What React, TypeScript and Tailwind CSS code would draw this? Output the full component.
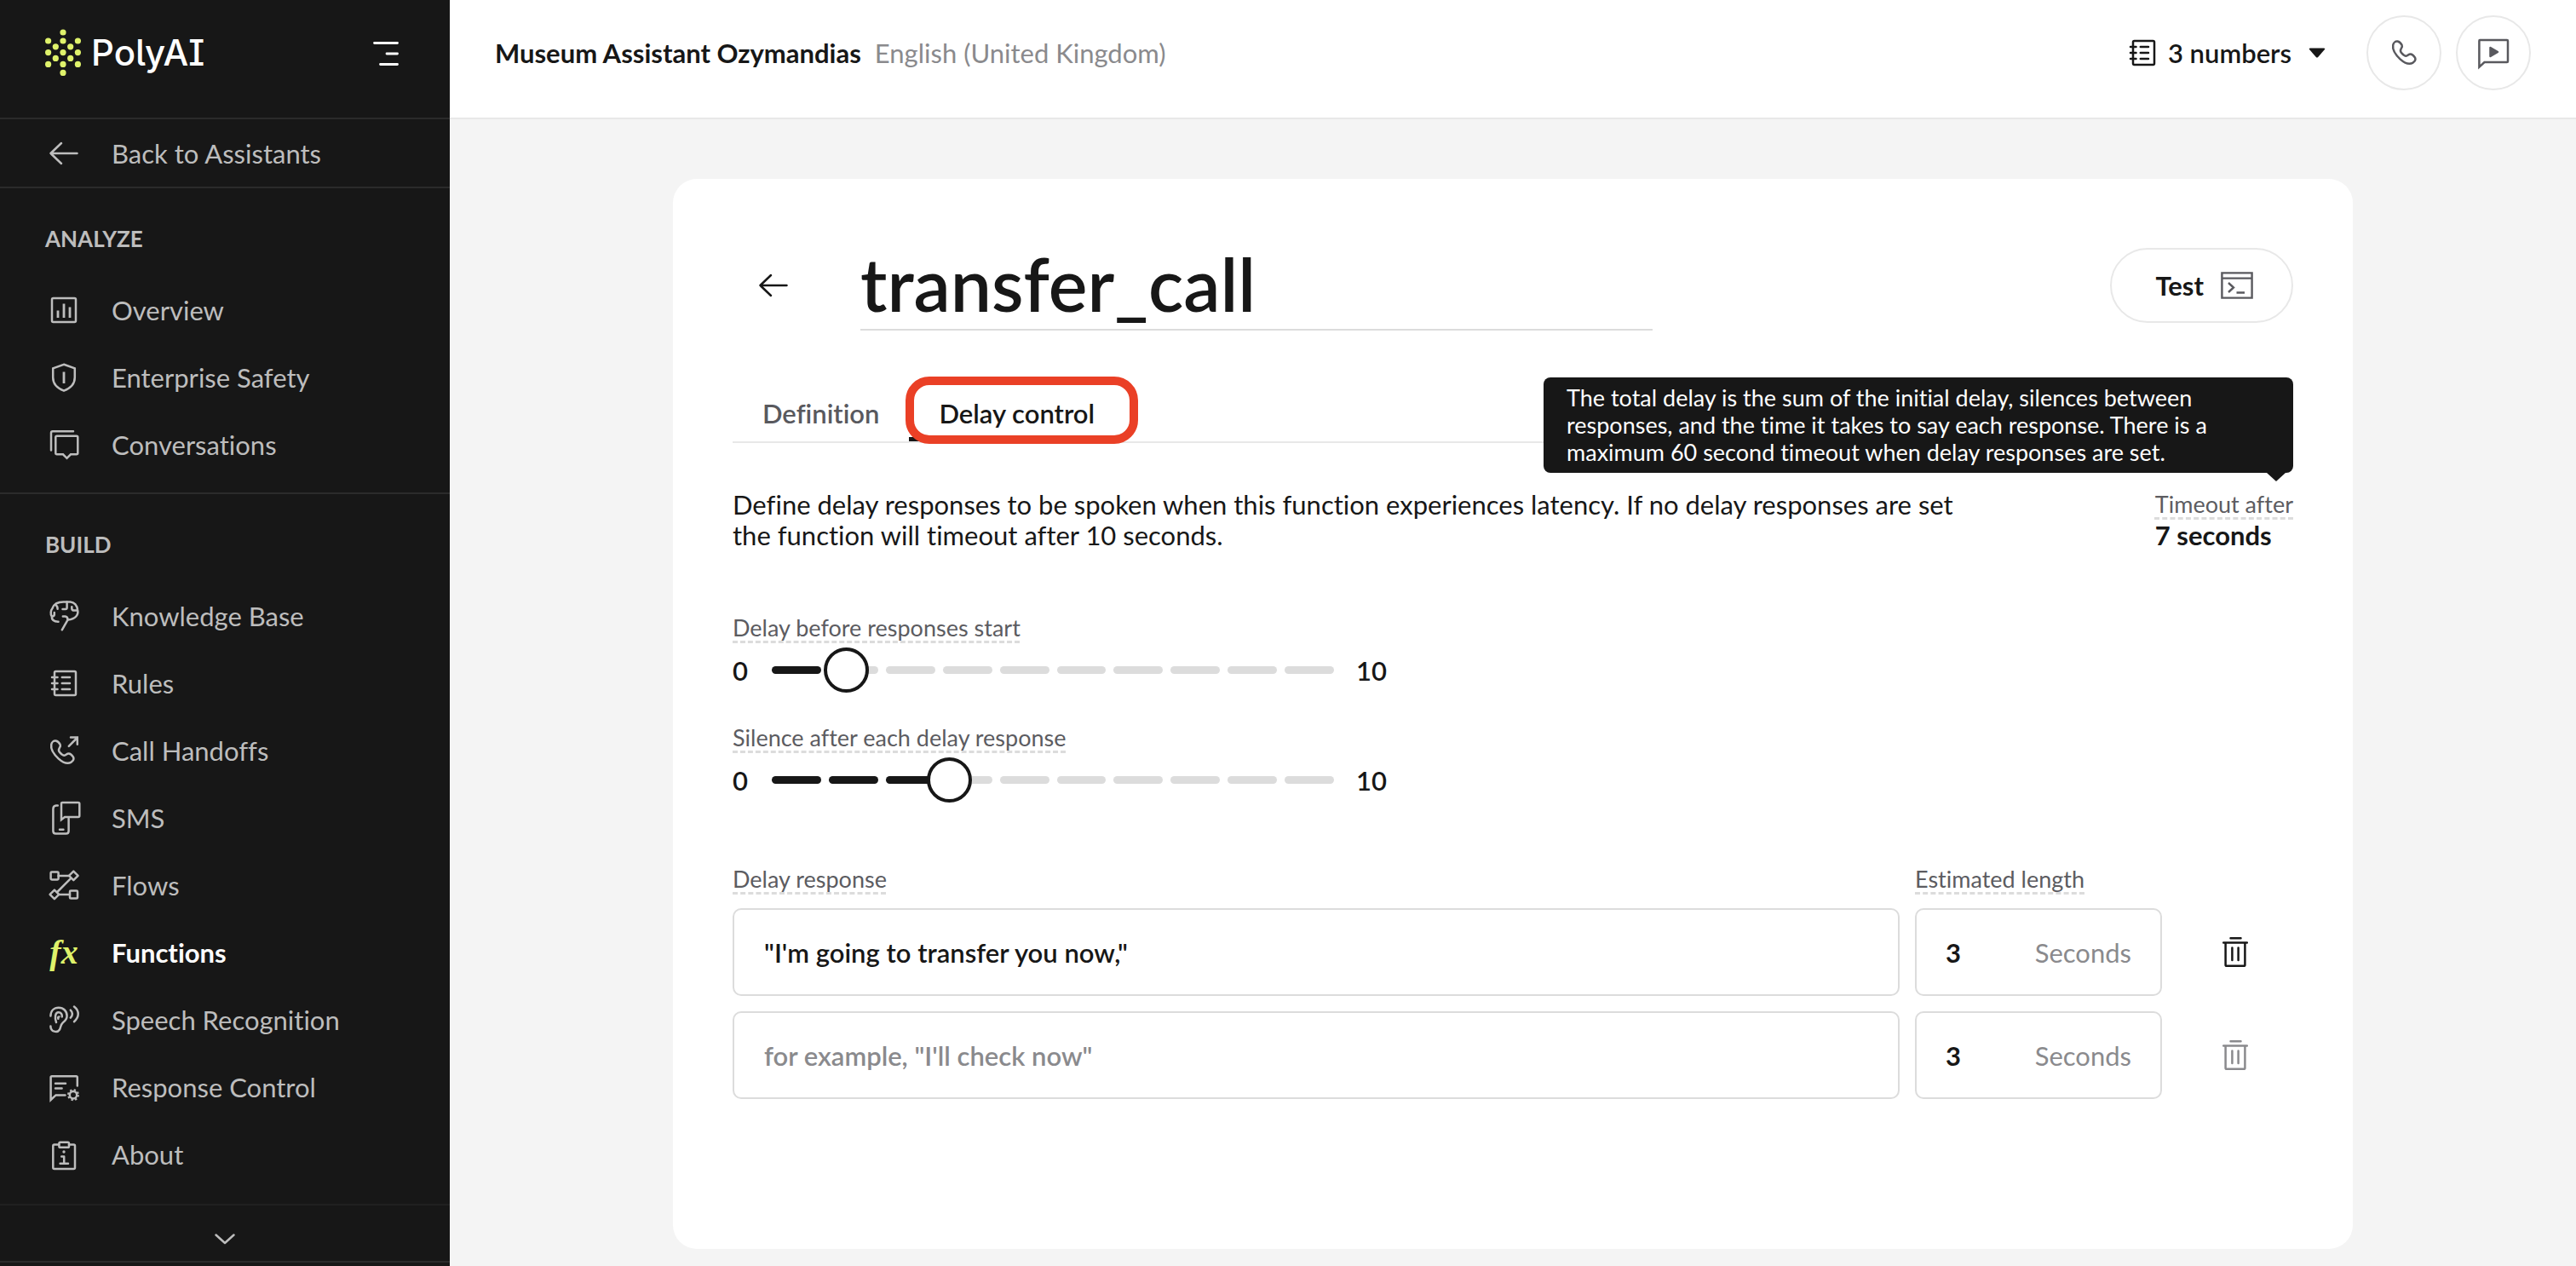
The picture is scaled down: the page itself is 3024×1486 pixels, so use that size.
import { useState } from "react";
import type { ReactNode } from "react";

function Icon({ children }: { children: ReactNode }) {
  return (
    <svg
      viewBox="0 0 40 40"
      className="size-10 shrink-0"
      fill="none"
      stroke="currentColor"
      strokeWidth="2.5"
      strokeLinecap="round"
      strokeLinejoin="round"
      aria-hidden="true"
    >
      {children}
    </svg>
  );
}

const ArrowLeft = () => (
  <Icon>
    <path d="M17 8 4.5 20 17 32M4.5 20H35.5" />
  </Icon>
);

const Overview = () => (
  <Icon>
    <rect x="6" y="6" width="28" height="28" rx="1.5" />
    <path d="M13 20.5V29M20 12.5V29M27 16.5V29" strokeWidth="2.8" strokeLinecap="butt" />
  </Icon>
);

const Shield = () => (
  <Icon>
    <path d="M20 4.8 32.8 9.3V20C32.8 27.5 27.5 32.8 20 35.6 12.5 32.8 7.2 27.5 7.2 20V9.3Z" strokeLinejoin="miter" />
    <path d="M20 13.5V27" strokeWidth="2.8" strokeLinecap="butt" />
  </Icon>
);

const Conversations = () => (
  <Icon>
    <path d="M5 26.5V6Q5 4.2 6.8 4.2H31" />
    <path d="M11.8 9.8H34.8Q36.3 9.8 36.3 11.3V29.8Q36.3 31.3 34.8 31.3H28L23.5 35.8 19 31.3H11.8Q10.3 31.3 10.3 29.8V11.3Q10.3 9.8 11.8 9.8Z" strokeLinejoin="miter" />
  </Icon>
);

const Brain = () => (
  <Icon>
    <path d="M13.5 26.8C8 27 5.5 24 5.8 20.5 4 18 4.5 13.5 6.5 11 8 6.5 12 3.4 19.5 3.4H27.5C32.5 3.6 35.5 8 36 12.5 37.5 18 34.5 23.5 24.5 24.6L17.8 36.3" />
    <path d="M18.8 20.6H21.5Q24.5 20.8 24.5 24.6M23.6 3.6V10.2Q23.6 12 21.8 12H18.5M11 7.5Q12.6 9 12.6 11.8M8.8 16V18.5Q8.6 20.2 6.5 20.4M29.3 9.3V11.3Q29.5 13.6 32 13.6H35.5" />
  </Icon>
);

const Notebook = () => (
  <Icon>
    <rect x="9" y="6" width="25" height="28" rx="1.5" />
    <path d="M6 13H12.5M6 20H12.5M6 27H12.5M17.8 13H27M17.8 20H27M17.8 27H27" />
  </Icon>
);

const handset =
  "M10.5 8.6C12.5 9 14.5 10.9 15.6 12.8 16.6 14.8 15.3 16.3 14.4 17.8 13.4 19.6 13.9 20.8 15.4 22.4 17.2 24.4 18.8 25.8 20.4 25.8 22.6 25.8 23.4 23.4 25.6 23.4 27.8 23.4 29.8 25.6 31 27.6 32.2 30 30.8 32 28.6 33.6 24.8 36 19.2 34.4 13.8 29.6 8 24.2 4.4 18 5.2 13 5.7 10.2 8 8.2 10.5 8.6Z";

const Handoff = () => (
  <Icon>
    <path d={handset} />
    <path d="M25.8 14.8 35.6 5M28 4.6H35.8V12.8" strokeLinejoin="miter" />
  </Icon>
);

const Sms = () => (
  <Icon>
    <path d="M12.8 5.4H11Q7.4 5.6 7.4 9.4V35.4Q7.4 38.4 10.4 38.4H22.6Q25.6 38.4 25.6 35.4V20.8M15 33.8H19.4" />
    <path d="M18.2 1.9H36.8Q38.3 1.9 38.3 3.4V17.6Q38.3 19.1 36.8 19.1H21L17 22.2V3.1Q17 1.9 18.2 1.9Z" strokeLinejoin="miter" />
  </Icon>
);

const Flows = () => (
  <Icon>
    <rect x="4.6" y="4.4" width="9" height="9" rx="1.2" />
    <rect x="27" y="26.6" width="9" height="9" rx="1.2" />
    <path d="M31.3 3.6 36.6 8.9 31.3 14.2 26 8.9ZM8.9 25.6 14.2 30.9 8.9 36.2 3.6 30.9Z" />
    <path d="M13.6 8.9H26M28 12.2 12.2 28M14.2 30.9H27" />
  </Icon>
);

const Ear = () => (
  <Icon>
    <path d="M4.4 15.5C4.6 9.5 8.4 5.8 13.8 5.8 19.6 5.8 23.6 9.8 23.6 15.4 23.6 19.4 21.2 21.4 18.8 23.4 15.8 26 16.8 28.4 14.8 31.8 12.6 35.2 4.4 34.8 4.4 27.4" />
    <path d="M11 23C9.2 18 9.4 11.2 13.8 11.2 16.6 11.2 18 13.6 17.8 16.4M13.4 18.8Q12.6 16.6 14.4 16.4" />
    <path d="M27.8 8.6Q32 13 27.8 17.6M32 4.6C38.4 9.6 38.2 17 32 22.2" />
  </Icon>
);

const ResponseControl = () => (
  <Icon>
    <path d="M35.8 18.6V8.6Q35.8 7.2 34.4 7.2H6Q4.6 7.2 4.6 8.6V35L10.6 29.4H21.5" strokeLinejoin="miter" />
    <path d="M10 15.7H22M10 21.6H17.6" />
    <circle cx="31" cy="29.2" r="4.2" />
    <circle cx="31" cy="29.2" r="6" strokeWidth="2" strokeDasharray="2.35 2.36" strokeLinecap="butt" />
  </Icon>
);

const About = () => (
  <Icon>
    <path d="M14.2 8.6H8.8Q7.3 8.6 7.3 10.1V35.4Q7.3 36.9 8.8 36.9H31.5Q33 36.9 33 35.4V10.1Q33 8.6 31.5 8.6H26" />
    <rect x="14.4" y="5.8" width="11.6" height="6" rx="1.4" />
    <path d="M17.2 22.6H20.2V30.6M15.6 30.8H25" />
    <circle cx="20" cy="17" r="1" fill="currentColor" strokeWidth="1.4" />
  </Icon>
);

const Trash = () => (
  <Icon>
    <path d="M14.5 3.2H26.5M6.2 8.4H33.8M8.6 8.4V34.4Q8.6 35.8 10 35.8H30Q31.4 35.8 31.4 34.4V8.4M16.4 14.4V29M23.6 14.4V29" />
  </Icon>
);

const FunctionGlyph = () => (
  <span aria-hidden="true" className="w-10 shrink-0 text-center font-['Liberation_Serif',serif] text-[40px] leading-10 font-bold text-[#dff26b] italic">
    fx
  </span>
);

const logoDots: [number, number][] = [
  [21, 4], [3.6, 14], [21, 14], [38.4, 14], [12.3, 20.8], [29.7, 20.8], [3.6, 27.6], [21, 27.6],
  [38.4, 27.6], [12.3, 34.4], [29.7, 34.4], [3.6, 41.4], [21, 41.4], [38.4, 41.4], [21, 51.4],
];

function NavItem({ icon, label, active }: { icon: ReactNode; label: string; active?: boolean }) {
  return (
    <li>
      <a
        href="#"
        aria-current={active ? "page" : undefined}
        className={`flex h-[79px] items-center gap-9 pl-[55px] ${active ? "font-bold text-white" : "text-[#bdbdbd]"}`}
      >
        {icon}
        {label}
      </a>
    </li>
  );
}

function NavSection({ title, children }: { title: string; children: ReactNode }) {
  return (
    <section>
      <h2 className="px-[53px] pt-[43px] pb-7 text-[26px] leading-8 font-bold">{title}</h2>
      <ul>{children}</ul>
    </section>
  );
}

function Sidebar() {
  return (
    <aside className="flex w-[528px] shrink-0 flex-col bg-[#171717] text-[#bdbdbd]">
      <div className="flex items-center justify-between border-b-2 border-[#2b2b2b] pt-[18px] pr-[60px] pb-8 pl-[53px]">
        <a href="#" className="flex h-[88px] items-center gap-3 text-white">
          <svg viewBox="0 0 42 56" className="h-14 w-[42px]" fill="#dff26b" aria-hidden="true">
            {logoDots.map(([x, y]) => (
              <circle key={`${x}-${y}`} cx={x} cy={y} r="3.6" />
            ))}
          </svg>
          <span className="font-[Inter,sans-serif] text-[42px] leading-none font-medium [font-feature-settings:'cv05','cv08']">PolyAI</span>
        </a>
        <button type="button" aria-label="Collapse menu" className="text-white">
          <svg viewBox="0 0 30 30" className="size-[30px]" stroke="currentColor" strokeWidth="2.8" strokeLinecap="round" aria-hidden="true">
            <path d="M1.5 3.5H28.5M16 16H28.5M8.5 28.5H28.5" />
          </svg>
        </button>
      </div>
      <a href="#" className="flex h-[81px] items-center gap-9 border-b-2 border-[#2b2b2b] pl-[55px]">
        <ArrowLeft />
        Back to Assistants
      </a>
      <nav className="grow">
        <div className="border-b-2 border-[#2b2b2b] pb-[17px]">
          <NavSection title="ANALYZE">
            <NavItem icon={<Overview />} label="Overview" />
            <NavItem icon={<Shield />} label="Enterprise Safety" />
            <NavItem icon={<Conversations />} label="Conversations" />
          </NavSection>
        </div>
        <NavSection title="BUILD">
          <NavItem icon={<Brain />} label="Knowledge Base" />
          <NavItem icon={<Notebook />} label="Rules" />
          <NavItem icon={<Handoff />} label="Call Handoffs" />
          <NavItem icon={<Sms />} label="SMS" />
          <NavItem icon={<Flows />} label="Flows" />
          <NavItem icon={<FunctionGlyph />} label="Functions" active />
          <NavItem icon={<Ear />} label="Speech Recognition" />
          <NavItem icon={<ResponseControl />} label="Response Control" />
          <NavItem icon={<About />} label="About" />
        </NavSection>
      </nav>
      <div className="border-t-2 border-[#202020] pb-1">
        <button type="button" aria-label="Show more" className="flex w-full items-center justify-center border-b-2 border-[#2b2b2b] pt-5 pb-[5px]">
          <Icon>
            <path d="M9.5 14.5 20 24 30.5 14.5" />
          </Icon>
        </button>
      </div>
    </aside>
  );
}

function TopBar() {
  return (
    <header className="flex items-center border-b-2 border-[#e8e8e8] bg-white pt-[18px] pr-[53px] pb-8 pl-[53px]">
      <h1 className="font-bold">Museum Assistant Ozymandias</h1>
      <p className="ml-4 text-[#8a8a8d]">English (United Kingdom)</p>
      <button type="button" className="mr-12 ml-auto flex items-center gap-[10px] font-semibold">
        <Notebook />
        3 numbers
        <svg viewBox="0 0 20 12" className="ml-[10px] h-3 w-5" fill="currentColor" aria-hidden="true">
          <path d="M2 .5H18Q20 .5 19 2L11.2 11Q10 12 8.8 11L1 2Q0 .5 2 .5Z" />
        </svg>
      </button>
      <div className="flex gap-[17px] text-[#59595e]">
        <button type="button" aria-label="Call" className="flex size-[88px] items-center justify-center rounded-full border-2 border-[#e8e8e8]">
          <Icon>
            <path d={handset} transform="translate(2 -2)" />
          </Icon>
        </button>
        <button type="button" aria-label="Chat" className="flex size-[88px] items-center justify-center rounded-full border-2 border-[#e8e8e8]">
          <Icon>
            <path d="M4 5H36Q37 5 37 6V30Q37 31 36 31H9.5L3.4 36.6V6Q3.4 5 4 5Z" strokeLinejoin="miter" />
            <path d="M16.5 14V24L25 19Z" fill="currentColor" />
          </Icon>
        </button>
      </div>
    </header>
  );
}

const hint = "text-[27px] text-[#5c5c61] underline decoration-[#dcdcdc] decoration-dashed decoration-[3px] underline-offset-[5px]";

function DelaySlider({ id, label, initial }: { id: string; label: string; initial: number }) {
  const [value, setValue] = useState(initial);
  return (
    <div>
      <label htmlFor={id} className={`block w-fit leading-8 ${hint}`}>{label}</label>
      <div className="mt-[7px] flex items-center font-semibold">
        <span className="w-[46px]">0</span>
        <div className="grid w-[660px] items-center">
          <div className="col-start-1 row-start-1 flex gap-[9px]">
            {Array.from({ length: 10 }, (_, i) => (
              <span key={i} className={`h-[9px] flex-1 rounded-full ${i < value ? "bg-[#171717]" : "bg-[#dcdcdc]"}`} />
            ))}
          </div>
          <input
            id={id}
            type="range"
            min={0}
            max={10}
            value={value}
            onChange={(e) => setValue(Number(e.target.value))}
            className="col-start-1 row-start-1 h-[53px] w-full cursor-pointer appearance-none bg-transparent [&::-webkit-slider-thumb]:size-[53px] [&::-webkit-slider-thumb]:appearance-none [&::-webkit-slider-thumb]:rounded-full [&::-webkit-slider-thumb]:border-4 [&::-webkit-slider-thumb]:border-[#171717] [&::-webkit-slider-thumb]:bg-white"
          />
        </div>
        <span className="ml-[26px]">10</span>
      </div>
    </div>
  );
}

function ResponseRow({ index, text }: { index: number; text: string }) {
  return (
    <>
      <input
        type="text"
        aria-label={`Delay response ${index}`}
        defaultValue={text}
        placeholder={`for example, "I'll check now"`}
        className="h-[103px] min-w-0 rounded-[10px] border-2 border-[#dcdcdc] px-[35px] font-semibold placeholder:text-[#8a8a8d]"
      />
      <div className="flex h-[103px] items-center rounded-[10px] border-2 border-[#dcdcdc] px-[34px]">
        <input
          type="text"
          inputMode="numeric"
          aria-label={`Estimated length ${index}`}
          defaultValue="3"
          className="w-16 min-w-0 grow font-bold"
        />
        <span className="text-[#8a8a8d]">Seconds</span>
      </div>
      <button
        type="button"
        aria-label={`Delete response ${index}`}
        disabled={!text}
        className="flex items-center justify-center disabled:text-[#8a8a8d]"
      >
        <Trash />
      </button>
    </>
  );
}

function FunctionEditor() {
  return (
    <main className="mx-auto mt-[70px] w-full max-w-[1972px] rounded-[28px] bg-white px-[70px] pt-[81px] pb-44">
      <div className="flex items-start">
        <button type="button" aria-label="Back" className="ml-7 flex h-[88px] items-center">
          <ArrowLeft />
        </button>
        <input
          type="text"
          aria-label="Function name"
          defaultValue="transfer_call"
          className="ml-[82px] h-[97px] w-[930px] border-b-2 border-[#dcdcdc] pb-3 text-[86px] leading-none font-semibold"
        />
        <button type="button" className="ml-auto flex h-[88px] items-center gap-5 rounded-full border-2 border-[#e8e8e8] pr-[45px] pl-[51px] font-bold">
          Test
          <svg viewBox="0 0 38 32" className="h-8 w-[38px] text-[#59595e]" fill="none" stroke="currentColor" strokeWidth="2.4" aria-hidden="true">
            <path d="M1.4 1.4H36.6V30.6H1.4ZM1.4 7.6H36.6M9 13 15 18.5 9 24M18.5 24.5H28" />
          </svg>
        </button>
      </div>

      <div role="tablist" className="mt-[54px] flex h-[78px] border-b-2 border-[#e8e8e8] font-semibold">
        <button type="button" role="tab" aria-selected="false" className="px-[35px] pt-[10px] text-[#59595e]">
          Definition
        </button>
        <button type="button" role="tab" aria-selected="true" className="relative border-b-[5px] border-[#171717] px-[35px] pt-[15px]">
          Delay control
          <span className="pointer-events-none absolute top-0 -right-4 -bottom-2 -left-1 rounded-[28px] border-[10px] border-[#ea4026]" />
        </button>
      </div>

      <div className="mt-[54px] flex items-start justify-between leading-9">
        <p className="max-w-[1450px]">
          Define delay responses to be spoken when this function experiences latency. If no delay responses are set the
          function will timeout after 10 seconds.
        </p>
        <div className="relative">
          <p className={hint} aria-describedby="timeout-tip">Timeout after</p>
          <p className="font-bold">7 seconds</p>
          <div
            id="timeout-tip"
            role="tooltip"
            className="absolute right-0 bottom-full mb-[19px] w-[880px] rounded-lg bg-[#171717] py-2 pr-16 pl-[27px] text-[27px] leading-8 text-white"
          >
            The total delay is the sum of the initial delay, silences between responses, and the time it takes to say each
            response. There is a maximum 60 second timeout when delay responses are set.
            <svg viewBox="0 0 22 10" className="absolute top-full right-[9px] h-2.5 w-[22px]" fill="#171717" aria-hidden="true">
              <path d="M0 0H22L11 10Z" />
            </svg>
          </div>
        </div>
      </div>

      <div className="mt-[75px] flex flex-col gap-[37px]">
        <DelaySlider id="delay-start" label="Delay before responses start" initial={1} />
        <DelaySlider id="delay-silence" label="Silence after each delay response" initial={3} />
      </div>

      <div className="mt-[74px] grid grid-cols-[1fr_290px_136px] gap-[18px]">
        <p className={`w-fit leading-8 ${hint}`}>Delay response</p>
        <p className={`col-span-2 w-fit leading-8 ${hint}`}>Estimated length</p>
        <ResponseRow index={1} text={`"I'm going to transfer you now,"`} />
        <ResponseRow index={2} text="" />
      </div>
    </main>
  );
}

export default function App() {
  return (
    <div className="flex min-h-screen bg-[#f4f4f4] font-[Lato,sans-serif] text-[31px] leading-9 text-[#171717] [font-variant-ligatures:no-common-ligatures]">
      <Sidebar />
      <div className="flex min-w-0 grow flex-col">
        <TopBar />
        <FunctionEditor />
      </div>
    </div>
  );
}
